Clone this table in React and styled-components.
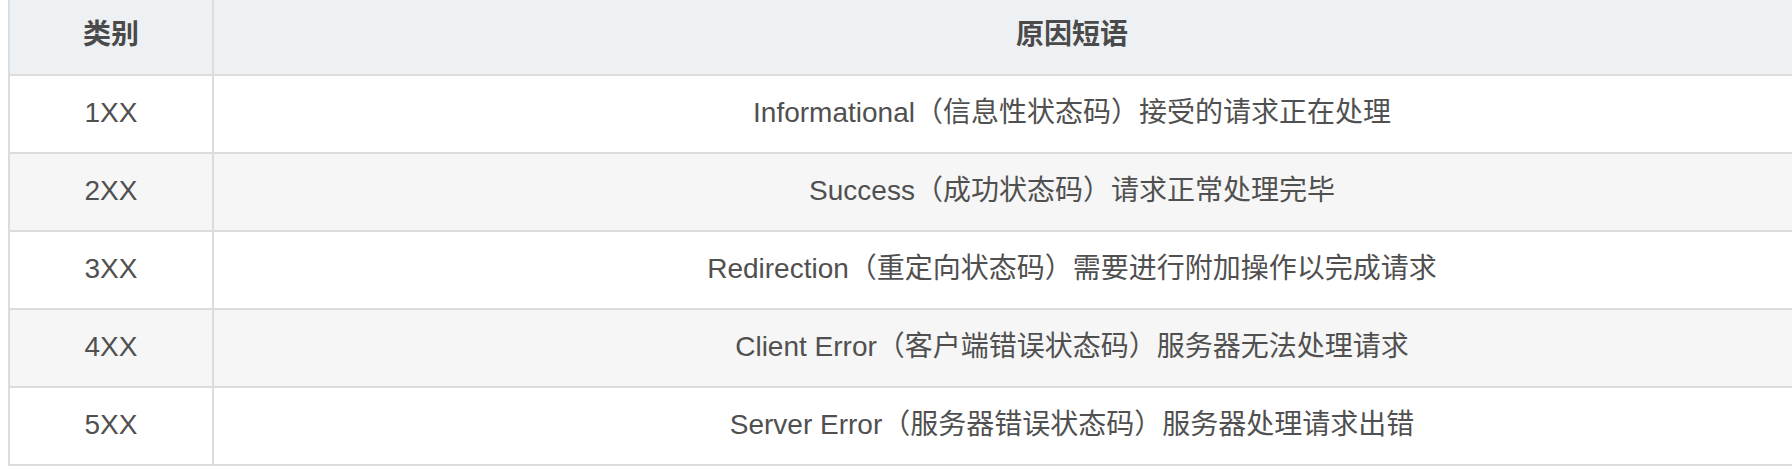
import React from "react";
import styled, { createGlobalStyle } from "styled-components";

const GlobalStyle = createGlobalStyle`
  html, body {
    margin: 0;
    padding: 0;
    background: #ffffff;
    overflow: hidden;
  }
`;

const rows = [
  { code: "1XX", text: "Informational（信息性状态码）接受的请求正在处理" },
  { code: "2XX", text: "Success（成功状态码）请求正常处理完毕" },
  { code: "3XX", text: "Redirection（重定向状态码）需要进行附加操作以完成请求" },
  { code: "4XX", text: "Client Error（客户端错误状态码）服务器无法处理请求" },
  { code: "5XX", text: "Server Error（服务器错误状态码）服务器处理请求出错" },
];

export default function App() {
  return (
    <Page>
      <GlobalStyle />
      <Table>
        <thead>
          <tr>
            <HeadCell $first>类别</HeadCell>
            <HeadCell>原因短语</HeadCell>
          </tr>
        </thead>
        <tbody>
          {rows.map((r, i) => (
            <Row key={r.code} $striped={i % 2 === 1}>
              <Cell $first>{r.code}</Cell>
              <Cell>{r.text}</Cell>
            </Row>
          ))}
        </tbody>
      </Table>
    </Page>
  );
}

const Page = styled.div`
  padding-left: 8px;
  width: 1940px;
  font-family: "Liberation Sans", Arial, "Noto Sans CJK SC", sans-serif;
`;

const Table = styled.table`
  width: 1922px;
  table-layout: fixed;
  border-collapse: separate;
  border-spacing: 0;
  border-left: 2px solid #dcdcdc;
  font-size: 28px;
  line-height: 40px;
  color: #505050;
`;

const HeadCell = styled.th`
  box-sizing: border-box;
  height: 76px;
  width: ${(p) => (p.$first ? "204px" : "auto")};
  padding: 0 0 5px 0;
  background: #eef1f4;
  font-weight: bold;
  color: #4a4a4a;
  text-align: center;
  vertical-align: middle;
  border-bottom: 2px solid #dcdcdc;
  border-right: ${(p) => (p.$first ? "2px solid #dcdcdc" : "none")};
`;

const Row = styled.tr`
  background: ${(p) => (p.$striped ? "#f6f6f6" : "#ffffff")};
`;

const Cell = styled.td`
  box-sizing: border-box;
  height: 78px;
  padding: 0 0 3px 0;
  text-align: center;
  vertical-align: middle;
  white-space: nowrap;
  border-bottom: 2px solid #dcdcdc;
  border-right: ${(p) => (p.$first ? "2px solid #dcdcdc" : "none")};
`;
